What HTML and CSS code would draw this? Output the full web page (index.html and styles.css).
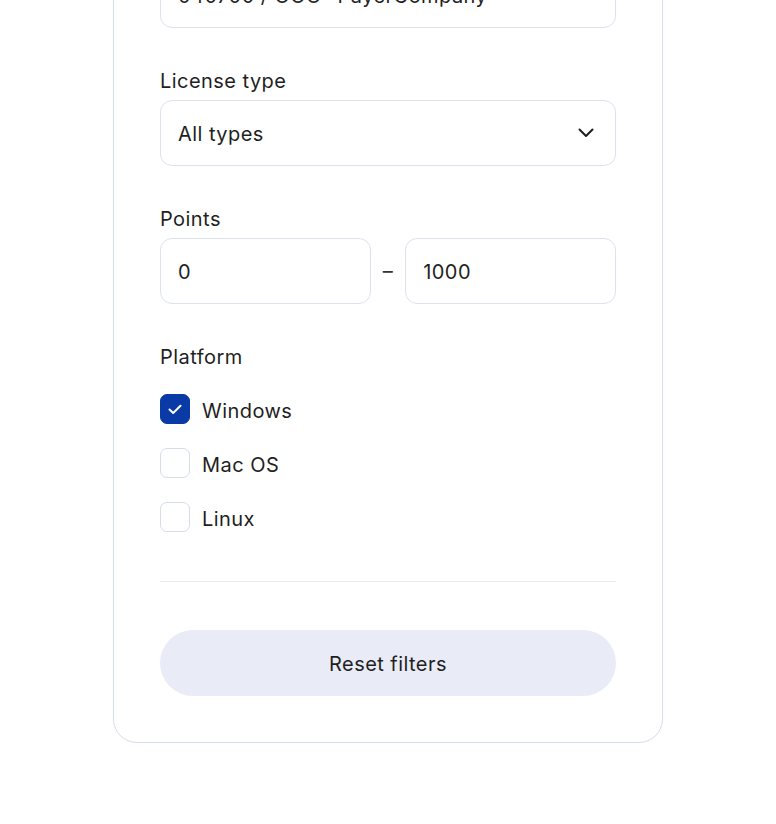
FILE: index.html
```html
<!DOCTYPE html>
<html lang="en">
<head>
<meta charset="utf-8">
<title>Filters</title>
<link rel="stylesheet" href="styles.css">
</head>
<body>
<div class="card">
  <div class="field">
    <div class="label">Payer</div>
    <div class="select">
      <span class="value">040700 / OOO "PayerCompany"</span>
      <svg class="chev" width="16" height="10" viewBox="0 0 16 10"><path d="M1.5 1.5 L8 8 L14.5 1.5" fill="none" stroke="#1f1f1f" stroke-width="2" stroke-linecap="round" stroke-linejoin="round"/></svg>
    </div>
  </div>
  <div class="field">
    <div class="label">License type</div>
    <div class="select">
      <span class="value">All types</span>
      <svg class="chev" width="16" height="10" viewBox="0 0 16 10"><path d="M1.5 1.5 L8 8 L14.5 1.5" fill="none" stroke="#1f1f1f" stroke-width="2" stroke-linecap="round" stroke-linejoin="round"/></svg>
    </div>
  </div>
  <div class="field">
    <div class="label">Points</div>
    <div class="range">
      <div class="input">0</div>
      <span class="dash">–</span>
      <div class="input">1000</div>
    </div>
  </div>
  <div class="field">
    <div class="label">Platform</div>
    <div class="checks">
      <div class="check">
        <span class="box checked">
          <svg width="14" height="11" viewBox="0 0 14 11"><path d="M1.5 5.5 L5.2 9 L12.5 1.8" fill="none" stroke="#fff" stroke-width="2" stroke-linecap="round" stroke-linejoin="round"/></svg>
        </span>
        <span class="check-label">Windows</span>
      </div>
      <div class="check">
        <span class="box"></span>
        <span class="check-label">Mac OS</span>
      </div>
      <div class="check">
        <span class="box"></span>
        <span class="check-label">Linux</span>
      </div>
    </div>
  </div>
  <div class="divider"></div>
  <button class="reset">Reset filters</button>
</div>
</body>
</html>
```
FILE: styles.css
```css
* { box-sizing: border-box; }

html, body {
  margin: 0;
  padding: 0;
  background: #ffffff;
}

body {
  font-family: "Inter", "Noto Sans", "Liberation Sans", sans-serif;
  color: #1f1f1f;
  font-size: 20px;
  letter-spacing: 0.45px;
}

.card {
  width: 550px;
  margin: -117px auto 0;
  border: 1px solid #d5dcea;
  border-radius: 24px;
  padding: 46px;
  display: flex;
  flex-direction: column;
  background: #fff;
}

.field {
  display: flex;
  flex-direction: column;
  margin-bottom: 40px;
}

.field:nth-of-type(4) {
  margin-bottom: 0;
}

.label {
  font-size: 20px;
  line-height: 24px;
  padding-top: 1px;
  margin-bottom: 7px;
  color: #1f1f1f;
}

.select {
  height: 66px;
  border: 1px solid #dde2ee;
  border-radius: 12px;
  padding: 2px 21px 0 17px;
  display: flex;
  align-items: center;
  justify-content: space-between;
  background: #fff;
}

.value {
  line-height: 24px;
  white-space: nowrap;
}

.chev { display: block; margin-top: -2px; }

.range {
  display: grid;
  grid-template-columns: 1fr auto 1fr;
  column-gap: 12px;
  align-items: center;
}

.input {
  height: 66px;
  border: 1px solid #dde2ee;
  border-radius: 12px;
  padding: 2px 17px 0;
  display: flex;
  align-items: center;
  line-height: 24px;
}

.dash {
  font-size: 20px;
  line-height: 24px;
  color: #333;
}

.checks {
  display: flex;
  flex-direction: column;
  gap: 24px;
  margin-top: 18px;
}

.check {
  display: flex;
  align-items: center;
  gap: 12px;
  height: 30px;
}

.box {
  width: 30px;
  height: 30px;
  border: 1px solid #d6dcea;
  border-radius: 7px;
  display: flex;
  align-items: center;
  justify-content: center;
  background: #fff;
  flex: none;
}

.box.checked {
  background: #0a3aa6;
  border-color: #0a3aa6;
}

.check-label {
  line-height: 24px;
  padding-top: 3px;
}

.divider {
  height: 1px;
  background: #e6e9f2;
  margin: 49px 0 48px;
}

.reset {
  height: 66px;
  border: none;
  border-radius: 33px;
  background: #e9ebf6;
  font-family: inherit;
  font-size: 20px;
  letter-spacing: 0.45px;
  padding-top: 2px;
  color: #1f1f1f;
  cursor: pointer;
  width: 100%;
}
```
